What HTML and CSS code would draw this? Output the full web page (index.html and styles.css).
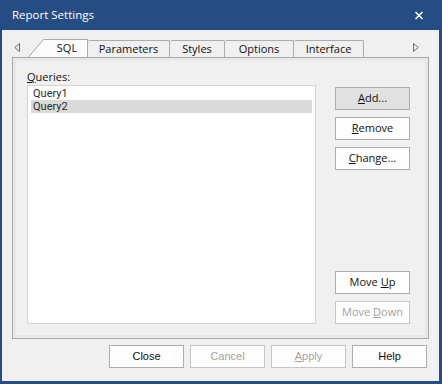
FILE: index.html
```html
<!DOCTYPE html>
<html lang="en">
<head>
  <meta charset="UTF-8" />
  <title>Report Settings</title>
  <link rel="stylesheet" href="styles.css">
</head>
<body>
  <div class="window">
    <div class="titlebar">
      <span class="title">Report Settings</span>
      <svg class="close" width="10" height="9" viewBox="0 0 10 9">
        <path d="M1.5 1 L8.5 8 M8.5 1 L1.5 8" stroke="#fff" stroke-width="1.6" fill="none"/>
      </svg>
    </div>
    <div class="client">
      <div class="tabstrip">
        <svg class="arrow arrow-left" width="6" height="9" viewBox="0 0 6 9">
          <path d="M5.5 0.5 L0.8 4.5 L5.5 8.5 Z" fill="none" stroke="#6d6d6d" stroke-width="1"/>
        </svg>
        <div class="tabs">
          <div class="tab active">
            <svg class="tab-shape" width="60" height="18" viewBox="0 0 60 18">
              <path d="M0.5 18 L15.5 0.5 L59.5 0.5 L59.5 18" fill="#fbfbfb" stroke="#a9a9a9" stroke-width="1"/>
            </svg>
            <span class="tab-label">SQL</span>
          </div>
          <div class="tab tab-params">Parameters</div>
          <div class="tab tab-styles">Styles</div>
          <div class="tab tab-options">Options</div>
          <div class="tab tab-interface">Interface</div>
        </div>
        <svg class="arrow arrow-right" width="6" height="9" viewBox="0 0 6 9">
          <path d="M0.5 0.5 L5.2 4.5 L0.5 8.5 Z" fill="none" stroke="#6d6d6d" stroke-width="1"/>
        </svg>
      </div>

      <div class="panel">
        <div class="list-col">
          <div class="field-label"><u>Q</u>ueries:</div>
          <ul class="list">
            <li>Query1</li>
            <li class="selected">Query2</li>
          </ul>
        </div>
        <div class="btn-col">
          <button class="btn default"><u>A</u>dd...</button>
          <button class="btn"><u>R</u>emove</button>
          <button class="btn"><u>C</u>hange...</button>
          <div class="spacer"></div>
          <button class="btn">Move <u>U</u>p</button>
          <button class="btn" disabled>Move <u>D</u>own</button>
        </div>
      </div>

      <div class="footer">
        <button class="btn classic">Close</button>
        <button class="btn classic" disabled>Cancel</button>
        <button class="btn classic" disabled><u>A</u>pply</button>
        <button class="btn classic">Help</button>
      </div>
    </div>
  </div>
</body>
</html>
```

FILE: styles.css
```css
:root {
  --frame: #254c83;
  --face: #f0f0f0;
  --line: #adadad;
  --text: #111;
  --disabled: #a3a3a3;
}
html, body {
  margin: 0;
  padding: 0;
}
body {
  width: 442px;
  height: 384px;
  overflow: hidden;
  font-family: 'Open Sans', 'Noto Sans', sans-serif;
  font-size: 11px;
  color: var(--text);
}
.window {
  width: 442px;
  height: 384px;
  box-sizing: border-box;
  background: var(--frame);
  padding: 0 3px 3px 2px;
  display: flex;
  flex-direction: column;
}
.titlebar {
  height: 30px;
  margin: 0 -3px 0 -2px;
  padding: 0 18px 0 12px;
  display: flex;
  align-items: center;
  justify-content: space-between;
  color: #fff;
  font-size: 11.5px;
}
.title { padding-bottom: 1px; }
.close { margin-top: 1px; }
.client {
  flex: 1;
  background: var(--face);
  display: flex;
  flex-direction: column;
}

/* tabs */
.tabstrip {
  height: 27px;
  display: flex;
  align-items: flex-end;
}
.arrow {
  align-self: flex-start;
  margin-top: 13px;
}
.arrow-left { margin-left: 12px; margin-right: 8px; }
.arrow-right { margin-left: auto; margin-right: 20px; }
.tabs {
  display: flex;
  align-items: flex-end;
}
.tab {
  height: 17px;
  box-sizing: border-box;
  border-top: 1px solid #acacac;
  border-right: 1px solid #acacac;
  border-top-right-radius: 2px;
  border-top-left-radius: 2px;
  text-align: center;
  line-height: 15px;
  white-space: nowrap;
}
.tab.active {
  position: relative;
  width: 60px;
  height: 18px;
  border: none;
  line-height: 17px;
}
.tab-shape {
  position: absolute;
  left: 0;
  top: 0;
}
.tab-label {
  position: relative;
  display: block;
  padding-left: 18px;
}
.tab-params { width: 82px; }
.tab-styles { width: 55px; }
.tab-options { width: 69px; }
.tab-interface { width: 70px; }

/* page */
.panel {
  height: 282px;
  margin: 0 10px;
  box-sizing: border-box;
  border: 1px solid #a9a9a9;
  box-shadow: inset 0 0 0 3px #e7e7e7;
  padding: 11px 18px 14px 14px;
  display: flex;
  gap: 19px;
}
.list-col {
  width: 289px;
  display: flex;
  flex-direction: column;
}
.field-label {
  height: 16px;
  line-height: 16px;
}
.list {
  flex: 1;
  margin: 0;
  padding: 1px 0;
  list-style: none;
  background: #fff;
  border: 1px solid #d3d3d3;
}
.list li {
  height: 13px;
  line-height: 13px;
  margin: 0 3px;
  padding-left: 2px;
  font-family: Roboto, 'Open Sans', sans-serif;
  font-size: 11px;
  color: #2b2b2b;
}
.list li.selected { background: #dadada; }
.btn-col {
  width: 75px;
  margin-top: 18px;
  display: flex;
  flex-direction: column;
  gap: 7px;
}
.spacer { flex: 1; }

.btn {
  width: 75px;
  height: 23px;
  box-sizing: border-box;
  border: 1px solid var(--line);
  background: #fdfdfd;
  font-family: inherit;
  font-size: 11px;
  color: var(--text);
  padding: 0 0 1px 0;
  line-height: 18px;
}
.btn.default { background: #e1e1e1; }
.btn:disabled {
  color: var(--disabled);
  border-color: #c6c6c6;
}

.footer {
  margin: 6px 12px 0 0;
  display: flex;
  justify-content: flex-end;
  gap: 6px;
}
.btn.classic {
  font-family: 'Liberation Sans', Arial, sans-serif;
  font-size: 11px;
}
```
